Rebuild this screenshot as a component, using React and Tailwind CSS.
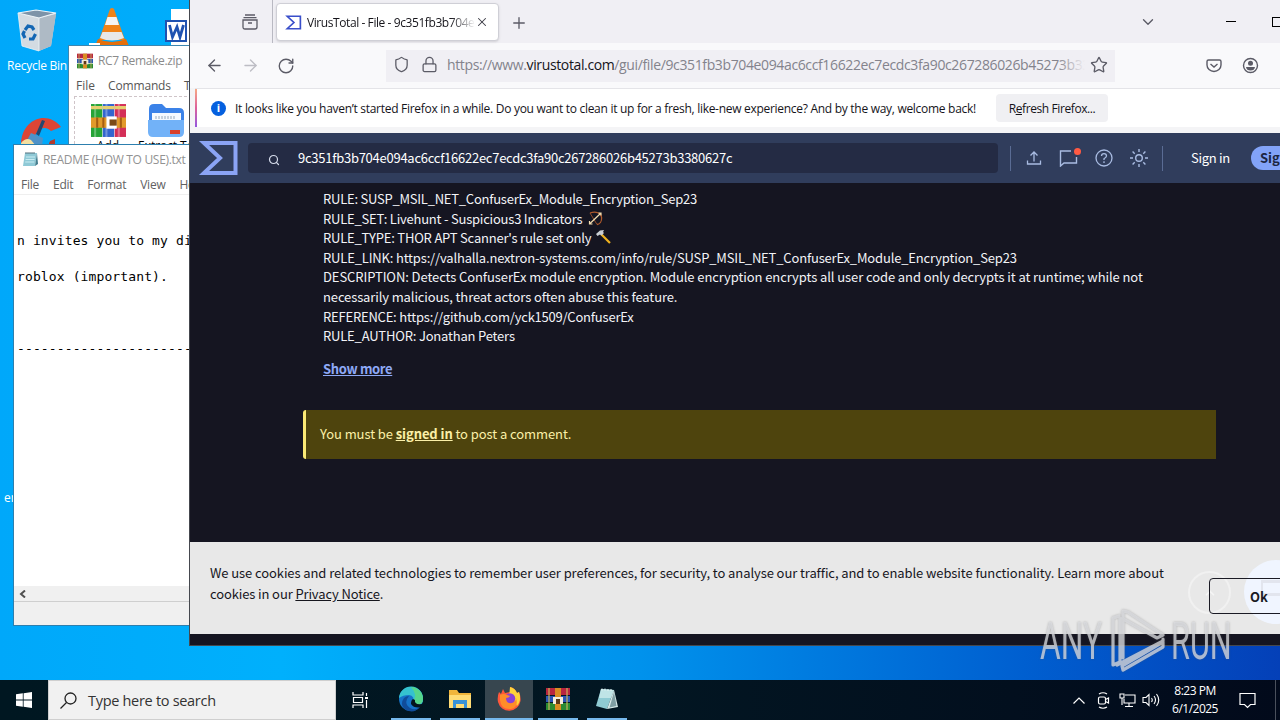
import {
  ArrowLeft,
  ArrowRight,
  ChevronDown,
  ChevronUp,
  Lock,
  Plus,
  RotateCw,
  Search,
  Shield,
  Star,
  X,
} from "lucide-react";

const HASH = "9c351fb3b704e094ac6ccf16622ec7ecdc3fa90c267286026b45273b3380627c";

const RecycleBinIcon = () => (
  <svg width="42" height="44" viewBox="0 0 42 44">
    <path d="M2 4 23 8 40 4 35 37 23 42 6 37Z" fill="#d3dbe2" />
    <path d="M23 9 40 5 35 37 23 42Z" fill="#aebac5" />
    <path d="M2 4 20 1 40 4 23 9Z" fill="#7d93a8" stroke="#eef4f8" strokeWidth="1.200" />
    <path d="M2 4 6 37 23 42V9" fill="none" stroke="#eef4f8" strokeWidth=".8" />
    <path d="m9 21 3-4 4 1 2 3M19.500 25 17 30h-4M9 29l-2-4 1.500-3" fill="none" stroke="#1467b4" strokeWidth="3.200" />
  </svg>
);

const ConeIcon = () => (
  <svg width="34" height="38" viewBox="0 0 34 38">
    <path d="M15 1q2-2 4 0l11 31H4Z" fill="#f08318" />
    <path d="m12.500 9 9 0 2.500 8H10Z" fill="#f4f4f4" />
    <path d="m7.500 24 19 0 2.500 6q-12 5-24 0Z" fill="#e8e8e8" />
    <path d="M3 31q14 6 28 0l3 7H0Z" fill="#e56f0b" />
  </svg>
);

const WordIcon = () => (
  <svg width="26" height="38" viewBox="0 0 26 38">
    <path d="M6 0h20v38H6Z" fill="#fff" />
    <path d="M1 12h20v20H1Z" fill="#fff" stroke="#1f52b0" strokeWidth="2" />
    <path d="m4.500 16 3 12L12 18l3 10 3.500-12" fill="none" stroke="#1f52b0" strokeWidth="2.800" />
  </svg>
);

const CleanerIcon = () => (
  <svg width="42" height="30" viewBox="0 0 42 30">
    <path d="M1 28C2 2 28-6 41 11L31 15C24 8 14 14 13 28Z" fill="#dc4535" />
    <path d="m22 4 3 1-6 15-3-2Z" fill="#24476f" />
    <path d="m11 17 12 5-1 8H4Z" fill="#4f92c8" />
    <path d="M1 27q5-6 10-3l5 6H1Z" fill="#f3dfa0" />
    <path d="m30 25 5-2v7h-7Z" fill="#b23a2e" />
  </svg>
);

const BooksIcon = ({ className }) => (
  <svg className={className} viewBox="0 0 34 34">
    <path d="M0 1h11v32H0Z" fill="#26a437" />
    <path d="M11.500 1h11v32h-11Z" fill="#3366cf" />
    <path d="M23 1h11v32H23Z" fill="#d42f58" />
    <path d="M3 1h2v32H3ZM14 1h2v32h-2ZM26 1h2v32h-2Z" fill="#fff" opacity=".3" />
    <path d="M0 3h11v3H0ZM11.500 3h11v3h-11ZM23 3h11v3H23Z" fill="#e6cf70" />
    <path d="M0 14h34v10H0Z" fill="#e29a2b" />
    <path d="M5 14h2v10H5ZM11 14h2v10h-2ZM28 14h2v10h-2Z" fill="#a55e12" />
    <path d="M15 13h10v12H15Z" fill="#fff" />
    <path d="M18 16h7v6h-7Z" fill="#7b4a16" />
  </svg>
);

const RarIcon = ({ className }) => (
  <svg className={className} viewBox="0 0 24 24">
    <path d="M0 1h24v7H0Z" fill="#b8263f" />
    <path d="M0 9h24v6H0Z" fill="#2b56b4" />
    <path d="M0 16h24v7H0Z" fill="#2a8a32" />
    <path d="M2 1h2v22H2ZM20 1h2v22h-2Z" fill="#c8b25a" opacity=".6" />
    <path d="M9 1h6v22H9Z" fill="#d98c22" />
    <path d="M7 10h10v7H7Z" fill="#f4ecda" />
    <path d="M10 12h4v5h-4Z" fill="#5a3818" />
  </svg>
);

const FolderIcon = () => (
  <svg width="36" height="35" viewBox="0 0 36 35">
    <path d="M1 6q0-5 5-5h8l4 4h13q5 0 5 5v18H1Z" fill="#3b82e8" />
    <path d="M4 10h29v12H4Z" fill="#f5f9ff" />
    <path d="M8 13v3m3-3v3m3-3v3m3-3v3m3-3v3m3-3v3m3-3v3" stroke="#9ab" />
    <path d="M0 17h36v12q0 5-5 5H5q-5 0-5-5Z" fill="#72b2f8" />
    <path d="M22 27h10v4H22Z" fill="#d9402b" />
  </svg>
);

const NotepadIcon = ({ className }) => (
  <svg className={className} viewBox="0 0 16 17">
    <path d="M3 2h12l-2 13H1Z" fill="#8fc9d6" />
    <path d="m13 15 2-13 1 11Z" fill="#457d8e" />
    <path d="M4 6h9M3.600 8.500h9M3.200 11h9" stroke="#c8ecf2" />
    <path d="M4 1v2m2-2v2m2-2v2m2-2v2m2-2v2" stroke="#55717c" />
  </svg>
);

const NotebookIcon = () => (
  <svg width="24" height="24" viewBox="0 0 24 24">
    <path d="m6 2 13 1-7 19-11-3Z" fill="#8fcbd3" />
    <path d="m6 2 13 1-3 8-12 0Z" fill="#bfe4e6" />
    <path d="m19 3 4 17-11 2Z" fill="#d9eceb" />
    <path d="m19 5 2.500 14-7 1.500Z" fill="#7f9ea3" />
    <path d="M7 1.500v2m3-2v2m3-1.500v2m3-2v2" stroke="#e9f6f6" />
  </svg>
);

const Sigma = ({ className, color, stroke }) => (
  <svg className={className} viewBox="0 0 40 36" fill="none" stroke={color} strokeWidth={stroke}>
    <path d="M5 3h31.500v30H5l16-15Z" />
  </svg>
);

const BowIcon = () => (
  <svg width="15" height="15" viewBox="0 0 15 15" fill="none">
    <path d="M2 2C8 0 13 2 13.500 6 14 10 12 13 9 13.500" stroke="#b05a2c" strokeWidth="1.300" />
    <path d="m2 2 7 11.500" stroke="#b05a2c" strokeWidth=".8" />
    <path d="M1.500 13 13 2M1.500 10v3h3M10.500 2H13v2.500" stroke="#f3ddb0" strokeWidth="1.200" />
  </svg>
);

const HammerIcon = () => (
  <svg width="15" height="15" viewBox="0 0 15 15">
    <path d="m5 4 9 9" stroke="#efb21f" strokeWidth="2.200" />
    <path d="m0 4 4-3.500 4-.5-1 2 1 1-2.500 2.500L4 4.500 1.500 6Z" fill="#c9ced2" />
  </svg>
);

const WinRarWindow = () => (
  <section className="absolute left-[68px] top-[45px] h-[200px] w-[240px] border border-[#3d86b0] bg-white font-['Open_Sans',sans-serif]">
    <div className="flex h-[29px] items-center gap-[5px] pl-[8px]">
      <RarIcon className="h-4 w-4" />
      <span className="whitespace-nowrap text-[12px] tracking-[-0.35px] text-[#8b8b8b]">RC7 Remake.zip</span>
    </div>
    <div className="flex h-[21px] items-center gap-[13px] pl-[7px] text-[12px] text-[#565656]">
      <span>File</span>
      <span className="tracking-[-0.15px]">Commands</span>
      <span>Tools</span>
    </div>
    <div className="ml-[5px] flex border-l border-t border-dashed border-[#cfc4c8] text-[12px] text-black">
      <div className="flex w-[66px] flex-col items-center pt-[6px]">
        <BooksIcon className="h-[35px] w-[35px]" />
        <span className="leading-[16px]">Add</span>
      </div>
      <div className="flex w-[50px] flex-col items-center pt-[6px]">
        <FolderIcon />
        <span className="whitespace-nowrap leading-[16px]">Extract To</span>
      </div>
    </div>
  </section>
);

const NotepadWindow = () => (
  <section className="absolute left-[13px] top-[144px] flex h-[482px] w-[300px] flex-col border border-[#2d7fae] bg-white">
    <div className="flex h-[29px] items-center gap-[5px] pl-[8px] font-['Open_Sans',sans-serif]">
      <NotepadIcon className="h-[17px] w-4" />
      <span className="whitespace-nowrap text-[12px] tracking-[-0.3px] text-[#929292]">README (HOW TO USE).txt</span>
    </div>
    <div className="flex h-[21px] items-center gap-[14px] border-b border-[#efefef] pl-[7px] pt-[2px] font-['Open_Sans',sans-serif] text-[12px] tracking-[-0.25px] text-[#616161]">
      <span>File</span>
      <span>Edit</span>
      <span>Format</span>
      <span>View</span>
      <span>Help</span>
    </div>
    <div className="flex-1 overflow-hidden whitespace-pre pl-[3px] pt-[37px] font-['DejaVu_Sans_Mono',monospace] text-[13px] leading-[18px] tracking-[0.12px] text-black">
      <p>n invites you to my discord</p>
      <p className="mt-[18px]">roblox (important).</p>
      <p className="mt-[54px]">------------------------------</p>
    </div>
    <div className="flex h-[16px] items-center border-b border-[#cfcfcf] bg-[#f0f0f0] pl-[5px]">
      <svg width="7" height="8" viewBox="0 0 7 8" fill="none" stroke="#505050" strokeWidth="2">
        <path d="M6 .5 2 4l4 3.500" />
      </svg>
    </div>
    <div className="h-[23px] bg-[#f0f0f0]" />
  </section>
);

const TabStrip = () => (
  <div className="flex h-[43px] items-start bg-[#f0eff4]">
    <div className="flex h-[43px] w-[83px] items-center border-r border-[#b9b9c2] pl-[52px]">
      <svg width="16" height="16" viewBox="0 0 16 16" fill="none" stroke="#5b5b66" strokeWidth="1.300">
        <path d="M3 1h10M1.500 3.700h13M1 6h14v7q0 2-2 2H3q-2 0-2-2ZM6 9h4" />
      </svg>
    </div>
    <div className="ml-[3px] mt-[3px] flex h-[38px] w-[223px] items-center rounded border border-[#cfcfd6] bg-white pl-[8px] shadow-sm">
      <Sigma className="h-[15px] w-[17px]" color="#394eca" stroke={4} />
      <span className="ml-[5px] w-[168px] overflow-hidden whitespace-nowrap bg-gradient-to-r from-[#15141a] from-85% to-white bg-clip-text pt-px text-[12px] tracking-[-0.42px] text-transparent">
        VirusTotal - File - 9c351fb3b704e0
      </span>
      <X size={14} strokeWidth={1.8} className="text-[#3c3c46]" />
    </div>
    <Plus size={18} strokeWidth={1.8} className="ml-[11px] mt-[14px] text-[#5b5b66]" />
    <ChevronDown size={18} strokeWidth={1.8} className="ml-[611px] mt-[13px] text-[#5b5b66]" />
    <div className="ml-[69px] mt-[21px] h-px w-[10px] bg-black" />
    <div className="ml-[36px] mt-[17px] h-[10px] w-[11px] shrink-0 border border-black" />
  </div>
);

const Toolbar = () => (
  <div className="flex h-[45px] items-center bg-[#f9f9fb] text-[#5b5b66]">
    <ArrowLeft size={19} strokeWidth={1.7} className="ml-[15px]" />
    <ArrowRight size={19} strokeWidth={1.7} className="ml-[17px] text-[#bdbdc4]" />
    <RotateCw size={18} strokeWidth={1.8} className="ml-[17px]" />
    <div className="ml-[91px] flex h-8 w-[729px] items-center bg-[#f0eff4] pb-[2px] pl-[7px]">
      <Shield size={17} strokeWidth={1.8} />
      <Lock size={17} strokeWidth={1.8} className="ml-[11px]" />
      <div className="relative ml-[9px] w-[638px] overflow-hidden whitespace-nowrap text-[14px] tracking-[-0.37px] text-[#83838c]">
        https://www.<span className="text-[#15141a]">virustotal.com</span>/gui/file/{HASH}
        <div className="absolute inset-y-0 right-0 w-7 bg-gradient-to-r from-transparent to-[#f0eff4]" />
      </div>
      <Star size={18} strokeWidth={1.8} className="ml-[5px] shrink-0" />
    </div>
    <svg className="ml-[91px]" width="16" height="16" viewBox="0 0 16 16" fill="none" stroke="currentColor" strokeWidth="1.400">
      <path d="M2.500 2h11Q15 2 15 3.500V7A7 6.500 0 0 1 1 7V3.500Q1 2 2.500 2ZM4.500 6 8 9l3.500-3" />
    </svg>
    <svg className="ml-[20px]" width="17" height="17" viewBox="0 0 17 17">
      <circle cx="8.500" cy="8.500" r="7" fill="none" stroke="currentColor" strokeWidth="1.400" />
      <circle cx="8.500" cy="6.300" r="2.500" fill="currentColor" />
      <path d="M4 10h9q-.5 3.500-4.500 3.500T4 10Z" fill="currentColor" />
    </svg>
  </div>
);

const NoticeBar = () => (
  <div className="h-[45px] bg-[#f4f4f6] pb-[6px] pl-[5px]">
    <div className="flex h-full border-t border-[#e4e4e8] bg-white">
      <div className="w-[2px] bg-gradient-to-b from-[#f5a884] via-[#dd5f9a] to-[#9454de]" />
      <div className="ml-[14px] mt-[12px] flex h-[15px] w-[15px] items-center justify-center rounded-full bg-[#0560df] text-[11px] font-bold text-white">
        i
      </div>
      <span className="ml-[9px] w-[743px] self-center whitespace-nowrap pt-[2px] text-[12px] tracking-[-0.29px] text-[#15141a]">
        It looks like you haven’t started Firefox in a while. Do you want to clean it up for a fresh, like-new experience? And by the way, welcome back!
      </span>
      <div className="ml-[18px] mt-[5px] flex h-[28px] w-[112px] items-center justify-center rounded bg-[#f0f0f3] pt-px text-[12px] tracking-[-0.4px] text-[#15141a]">
        <span>R<u>e</u>fresh Firefox...</span>
      </div>
    </div>
  </div>
);

const SiteHeader = () => (
  <div className="flex h-[50px] items-center bg-[#303d5c] text-[#a9bce2]">
    <Sigma className="ml-[8px] h-[36px] w-[42px] shrink-0" color="#8ba4f5" stroke={4} />
    <div className="ml-[8px] flex h-[30px] w-[750px] items-center rounded bg-[#242b44] pl-[20px] text-white">
      <Search size={12} strokeWidth={2.4} className="mt-[3px] text-[#d5dbea]" />
      <span className="ml-[18px] text-[13px] tracking-[-0.26px]">{HASH}</span>
    </div>
    <div className="ml-[12px] h-[25px] w-px bg-[#5a6c94]" />
    <svg className="ml-[15px]" width="16" height="16" viewBox="0 0 16 16" fill="none" stroke="currentColor" strokeWidth="1.300">
      <path d="M1.500 10.500V14h13v-3.500M8 11.500V2M4.500 5.500 8 2l3.500 3.500" />
    </svg>
    <div className="relative ml-[17px]">
      <svg width="19" height="18" viewBox="0 0 19 18" fill="none" stroke="currentColor" strokeWidth="1.400">
        <path d="M17.500 8v6H5l-3.500 3V2H12" />
      </svg>
      <div className="absolute -top-px right-[-3px] h-[7px] w-[7px] rounded-full bg-[#ff5a43]" />
    </div>
    <svg className="ml-[17px]" width="18" height="18" viewBox="0 0 18 18" fill="none" stroke="currentColor" strokeWidth="1.300">
      <circle cx="9" cy="9" r="8" />
      <path d="M6.500 7Q6.500 4.700 9 4.700T11.500 7Q11.500 8.200 9 9.700V11M9 12.300V14" />
    </svg>
    <svg className="ml-[16px]" width="20" height="20" viewBox="0 0 20 20" fill="none" stroke="currentColor" strokeWidth="1.400">
      <circle cx="10" cy="10" r="3.300" />
      <path d="M10 1v3m0 12v3M1 10h3m12 0h3M3.600 3.600l2.100 2.100m8.600 8.600 2.100 2.100M3.600 16.400l2.100-2.100m8.600-8.600 2.100-2.100" />
    </svg>
    <div className="ml-[13px] h-[25px] w-px bg-[#5a6c94]" />
    <span className="ml-[28px] w-[40px] whitespace-nowrap text-[13px] tracking-[-0.3px] text-white">Sign in</span>
    <div className="ml-[20px] flex h-[24px] w-[80px] shrink-0 items-center rounded-full bg-[#82a3f8] pl-[9px] text-[13px] font-bold text-[#1c2642]">
      Sign up
    </div>
  </div>
);

const Comment = () => (
  <div className="ml-[133px] w-[840px] whitespace-nowrap pt-[6px] text-[13px] leading-[19.6px] text-[#f2f3f7]">
    <p className="tracking-[-0.24px]">RULE: SUSP_MSIL_NET_ConfuserEx_Module_Encryption_Sep23</p>
    <p className="flex items-center tracking-[-0.22px]">
      RULE_SET: Livehunt - Suspicious3 Indicators <span className="ml-[6px]"><BowIcon /></span>
    </p>
    <p className="flex items-center tracking-[-0.2px]">
      RULE_TYPE: THOR APT Scanner's rule set only <span className="ml-[5px]"><HammerIcon /></span>
    </p>
    <p className="tracking-[-0.17px]">
      RULE_LINK: https://valhalla.nextron-systems.com/info/rule/SUSP_MSIL_NET_ConfuserEx_Module_Encryption_Sep23
    </p>
    <p className="tracking-[-0.09px]">
      DESCRIPTION: Detects ConfuserEx module encryption. Module encryption encrypts all user code and only decrypts it at runtime; while not
    </p>
    <p className="tracking-[-0.12px]">necessarily malicious, threat actors often abuse this feature.</p>
    <p className="tracking-[-0.21px]">REFERENCE: https://github.com/yck1509/ConfuserEx</p>
    <p className="tracking-[-0.19px]">RULE_AUTHOR: Jonathan Peters</p>
    <p className="mt-[13px] font-bold tracking-[-0.35px] text-[#8ea9f6] underline">Show more</p>
  </div>
);

const CookieBanner = () => (
  <div className="flex h-[92px] bg-[#e8e8e8]">
    <p className="w-[999px] shrink-0 whitespace-nowrap pl-[20px] pt-[20px] text-[13px] leading-[21px] tracking-[-0.09px] text-[#16161d]">
      We use cookies and related technologies to remember user preferences, for security, to analyse our traffic, and to enable website functionality. Learn more about
      <br />
      <span className="tracking-[-0.12px]">cookies in our <u>Privacy Notice</u>.</span>
    </p>
    <div className="relative ml-[20px] mt-[36px] flex h-[36px] w-[100px] shrink-0 items-center">
      <div className="absolute left-[35px] top-[-18px] h-[64px] w-[64px] rounded-full bg-[#f0f5ff]">
        <div className="ml-[17px] mt-[20px] h-[16px] w-[40px] border-y-[3px] border-l-2 border-[#e2e5ee]" />
      </div>
      <div className="absolute left-[-21px] top-[-7px] flex h-[43px] w-[43px] items-center justify-center rounded-full border-2 border-[#f1f1f1] text-[#f5f5f5]">
        <ChevronUp size={14} strokeWidth={3} />
      </div>
      <div className="relative flex h-full w-full items-center rounded border border-[#1a1a24] pl-[40px] text-[13px] font-bold text-[#1a1a24]">
        Ok
      </div>
    </div>
  </div>
);

const FirefoxWindow = () => (
  <section className="absolute left-[189px] top-0 flex h-[646px] w-[1150px] flex-col border-b border-l border-[#45484e] bg-[#151521]">
    <div className="font-['Open_Sans',sans-serif]">
      <TabStrip />
      <Toolbar />
      <NoticeBar />
    </div>
    <div className="flex flex-1 flex-col font-['Noto_Sans_CJK_SC',sans-serif]">
      <SiteHeader />
      <Comment />
      <div className="ml-[113px] mt-[32px] flex h-[49px] w-[913px] items-center whitespace-pre rounded-l-[3px] border-l-[3px] border-[#fae975] bg-[#4e440d] pb-[2px] pl-[14px] text-[13px] tracking-[-0.08px] text-[#fbf0a8]">
        You must be <b className="underline">signed in</b> to post a comment.
      </div>
      <div className="mt-[83px]">
        <CookieBanner />
      </div>
    </div>
  </section>
);

const Watermark = () => (
  <div className="absolute left-[1040px] top-[606px] flex h-[68px] w-[200px] items-center font-['Roboto',sans-serif] text-[52px] text-[#dcdee2]/75 drop-shadow-[0_0_1px_rgba(90,90,90,0.5)]">
    <span className="w-[62px] origin-left scale-x-[0.61] pt-[3px]">ANY</span>
    <svg className="ml-[8px] shrink-0" width="56" height="64" viewBox="0 0 56 64" fill="none" stroke="currentColor" strokeWidth="3.200" strokeLinejoin="round" strokeLinecap="round">
      <path d="M9 8 3 10v47l7-3V10M13 50V3l5 1 35 23-6 3-32-18M7 57l46-24v-2M13 62l-1-4 41-24v5L13 62" />
    </svg>
    <span className="ml-[5px] origin-left scale-x-[0.59] pt-[3px]">RUN</span>
  </div>
);

const EdgeIcon = () => (
  <svg width="26" height="26" viewBox="0 0 26 26">
    <circle cx="13" cy="13" r="12" fill="#1673c9" />
    <path d="M1 12A12 12 0 0 1 25 13q0 6-7 6-4 0-3-3 2-6-4-7-6 0-10 3Z" fill="#35c2cf" />
    <path d="M13 1A12 12 0 0 1 25 13q0 6-7 6-4 0-3-3 5-7-2-15Z" fill="#55d68c" />
    <path d="M11 10q-6 7 1 12 5 3 10-1-6 7-14 3-7-5-2-12 2-2 5-2Z" fill="#104c9a" />
    <path d="M17 14q-1 5 7 4l1 3q-9 2-12-3 0-4 2-5Z" fill="#04151f" />
  </svg>
);

const ExplorerIcon = () => (
  <svg width="22" height="20" viewBox="0 0 22 20">
    <path d="M0 1h8l2 3h12v15H0Z" fill="#f0b53b" />
    <path d="M0 6h22v13H0Z" fill="#ffdc75" />
    <path d="M4 11h14v8h-3v-4H7v4H4Z" fill="#3992d6" />
  </svg>
);

const FirefoxIcon = () => (
  <svg width="26" height="26" viewBox="0 0 26 26">
    <path d="m3 6 2 2 2-5 2 4 5-1V1q5 1 7 6l2-1q2 4 1.500 9A11.500 11.500 0 0 1 2 16Q1 11 3 6Z" fill="#ff583b" />
    <path d="M14 1q5 1 7 6l2-1q3 8-2 14-3-8-9-9Q14 7 14 1Z" fill="#ffd43a" />
    <circle cx="14" cy="12.500" r="5.200" fill="#8a42d5" />
    <path d="M4 9q4-2 7 0l3 1q-1 2-4 2 0 6 6 5 4-1 4-5 3 9-5 11Q5 24 4 14Z" fill="#ff8d29" />
  </svg>
);

const TaskButton = ({ children, active }) => (
  <div className={active ? "flex h-10 w-12 flex-col items-center bg-[#37464f]" : "flex h-10 w-12 flex-col items-center"}>
    <div className="flex flex-1 items-center">{children}</div>
    <div className={active ? "h-[2px] w-12 bg-[#76b9ed]" : "h-[2px] w-10 bg-[#76b9ed]"} />
  </div>
);

const Taskbar = () => (
  <footer className="absolute inset-x-0 bottom-0 flex h-10 items-center bg-gradient-to-r from-[#001721] via-[#021622] to-[#020a1b] font-['Open_Sans',sans-serif] text-white">
    <div className="flex w-12 justify-center">
      <svg width="16" height="16" viewBox="0 0 16 16" fill="#fff">
        <path d="m0 2.200 6.800-.9v6.300H0ZM7.600 1.200 16 0v7.600H7.600ZM0 8.400h6.800v6.300L0 13.800ZM7.600 8.400H16V16l-8.400-1.200Z" />
      </svg>
    </div>
    <div className="flex h-10 w-[288px] items-center border border-[#cfcfcf] bg-[#f1f1f1] pl-[11px] text-[#333]">
      <svg width="17" height="17" viewBox="0 0 17 17" fill="none" stroke="#222" strokeWidth="1.300">
        <circle cx="10.500" cy="6.500" r="5.500" />
        <path d="m6.500 10.500-6 6" />
      </svg>
      <span className="ml-[11px] pt-px text-[14.500px] tracking-[-0.3px]">Type here to search</span>
    </div>
    <div className="flex w-[51px] justify-center">
      <svg className="mr-[2px]" width="17" height="16" viewBox="0 0 17 16" fill="none" stroke="#fff" strokeWidth="1.200">
        <path d="M1 0v3h10V0M1 16v-3h10v3M1.500 5.500h9v5h-9ZM14.500 1v3m0 4v8" />
        <path d="M13 5h3v2h-3Z" fill="#fff" stroke="none" />
      </svg>
    </div>
    <div className="flex gap-px">
      <TaskButton><EdgeIcon /></TaskButton>
      <TaskButton><ExplorerIcon /></TaskButton>
      <TaskButton active><FirefoxIcon /></TaskButton>
      <TaskButton><RarIcon className="h-6 w-6" /></TaskButton>
      <TaskButton><NotebookIcon /></TaskButton>
    </div>
    <div className="ml-auto flex h-full items-center">
      <svg width="12" height="7" viewBox="0 0 12 7" fill="none" stroke="#fff" strokeWidth="1.200">
        <path d="m.5 6.500 5.500-5.500 5.500 5.500" />
      </svg>
      <svg className="ml-[12px]" width="13" height="17" viewBox="0 0 13 17" fill="none" stroke="#fff" strokeWidth="1.200">
        <path d="M2 2q4-2.500 8 0M2 15q4 2.500 8 0M3 5h4q1.500 0 1.500 1.500v4q0 1.500-1.500 1.500H3q-1.500 0-1.500-1.500v-4Q1.500 5 3 5ZM8.500 7.500 11.500 6v5l-3-1.500" />
      </svg>
      <svg className="ml-[9px]" width="17" height="15" viewBox="0 0 17 15" fill="none" stroke="#fff" strokeWidth="1.100">
        <path d="M6 2h10v8H5V6M1 1h4v4H1ZM3 5v7M10 10v3M6 13.500h8" />
      </svg>
      <svg className="ml-[6px]" width="18" height="16" viewBox="0 0 18 16" fill="none" stroke="#fff" strokeWidth="1.100">
        <path d="M1 5.500h3l3-3v11l-3-3H1ZM9.500 6q1.500 2 0 4M12 4q3 4 0 8M14.500 2q4.500 6 0 12" />
      </svg>
      <div className="ml-[11px] flex w-[48px] flex-col items-center whitespace-nowrap text-[12px] leading-[18px] tracking-[-0.5px]">
        <span>8:23 PM</span>
        <span>6/1/2025</span>
      </div>
      <svg className="ml-[20px]" width="17" height="17" viewBox="0 0 17 17" fill="none" stroke="#fff" strokeWidth="1.200">
        <path d="M1 1.500h15v11h-4.500l-3 3-3-3H1Z" />
      </svg>
      <div className="ml-[19px] mr-[4px] h-full w-px bg-[#4a505c]" />
    </div>
  </footer>
);

const App = () => {
  return (
    <div className="relative h-[720px] w-[1280px] overflow-hidden bg-[linear-gradient(to_right,#00a8fa_0%,#00b0fc_22%,#0092ec_50%,#005fd0_80%,#0440b8_100%)]">
      <div className="absolute left-[16px] top-[9px]"><RecycleBinIcon /></div>
      <span className="absolute left-[7px] top-[57px] whitespace-nowrap font-['Open_Sans',sans-serif] text-[12px] tracking-[-0.25px] text-white">
        Recycle Bin
      </span>
      <div className="absolute left-[95px] top-[8px]"><ConeIcon /></div>
      <div className="absolute left-[89px] top-[43px] h-[4px] w-[11px] bg-white" />
      <div className="absolute left-[165px] top-[9px]"><WordIcon /></div>
      <div className="absolute left-[20px] top-[116px]"><CleanerIcon /></div>
      <span className="absolute left-[4px] top-[489px] font-['Open_Sans',sans-serif] text-[12px] text-white">er</span>
      <WinRarWindow />
      <NotepadWindow />
      <FirefoxWindow />
      <Taskbar />
      <Watermark />
    </div>
  );
};

export default App;
